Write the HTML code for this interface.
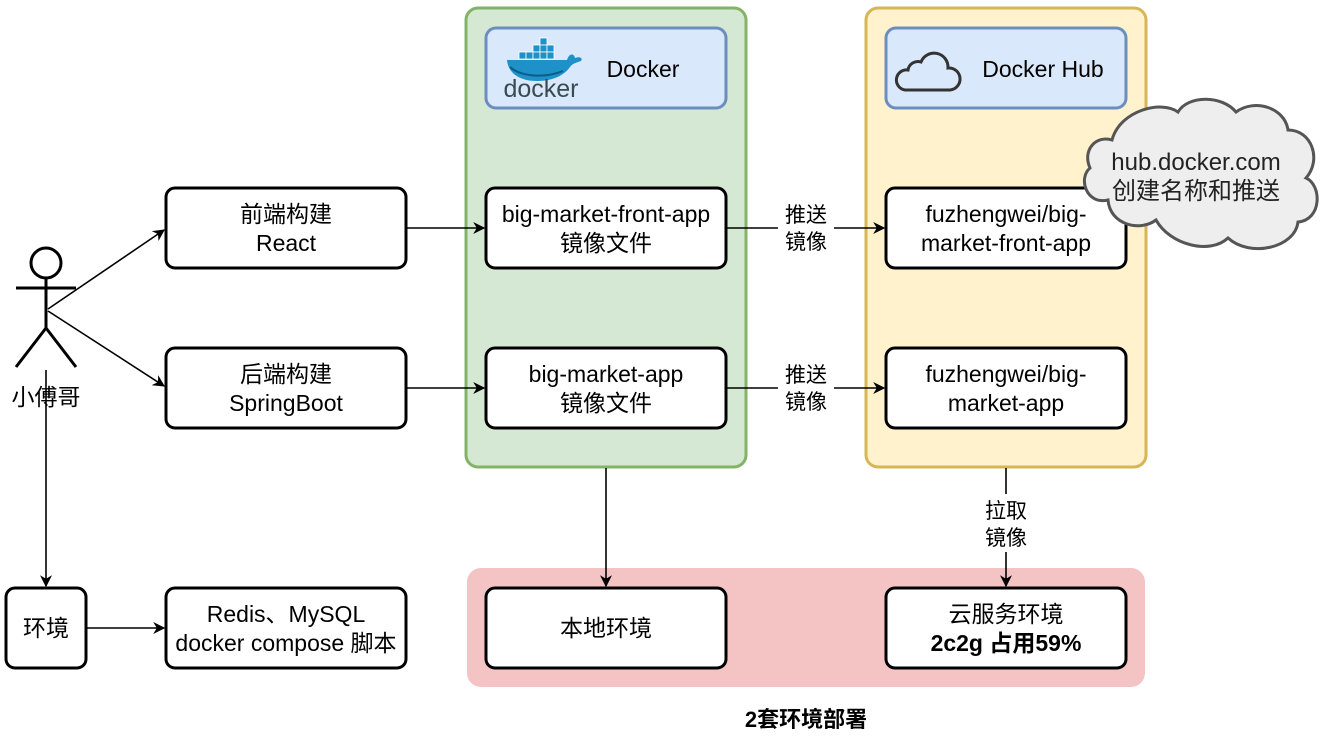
<!DOCTYPE html>
<html><head><meta charset="utf-8"><style>
html,body{margin:0;padding:0;background:#fff;}
svg{display:block}
text{font-family:"Liberation Sans","Noto Sans CJK SC",sans-serif;font-size:23px;fill:#000;text-anchor:middle;}
</style></head><body>
<svg width="1324" height="742" viewBox="0 0 1324 742" xmlns="http://www.w3.org/2000/svg">
<defs>
<marker id="a" viewBox="0 0 10 10" refX="9" refY="5" markerWidth="12" markerHeight="12" markerUnits="userSpaceOnUse" orient="auto">
<path d="M0,0 L10,5 L0,10 L3,5 Z" fill="#000"/></marker>
</defs>
<rect x="466" y="8" width="280" height="459" rx="12" fill="#d5e8d4" stroke="#82b366" stroke-width="3"/>
<rect x="866" y="8" width="280" height="459" rx="12" fill="#fff2cc" stroke="#d6b656" stroke-width="3"/>
<rect x="467" y="568" width="678" height="119" rx="14" fill="#f4c4c4"/>
<rect x="486" y="28" width="240" height="80" rx="10" fill="#dae8fc" stroke="#6c8ebf" stroke-width="3"/>
<rect x="886" y="28" width="240" height="80" rx="10" fill="#dae8fc" stroke="#6c8ebf" stroke-width="3"/>
<text x="643" y="77">Docker</text>
<text x="1043" y="77">Docker Hub</text>
<g>
<g fill="#1d91c8" stroke="#fff" stroke-width="0.8">
<rect x="540" y="38" width="7" height="7"/>
<rect x="533" y="45" width="7" height="7"/><rect x="540" y="45" width="7" height="7"/><rect x="547" y="45" width="7" height="7"/>
<rect x="519" y="52" width="7" height="7"/><rect x="526" y="52" width="7" height="7"/><rect x="533" y="52" width="7" height="7"/><rect x="540" y="52" width="7" height="7"/><rect x="547" y="52" width="7" height="7"/>
</g>
<path d="M507,60 H567 C569,53 574,53 575,58 C580,56 583,58 581,61 C575,63 572,64 570,67 C563,77 550,81 537,81 C518,81 508,72 507,60 Z" fill="#1d91c8"/>
<path d="M510,67 C520,76 543,79 563,71" stroke="#0c5c88" stroke-width="2" fill="none"/>
<text x="541" y="97" style="font-size:25px;fill:#3a4a50">docker</text>
</g>
<path d="M905,90 H950 A11,11 0 0 0 948,68 A14,14 0 0 0 921,62 A10,10 0 0 0 908,70 A10,10 0 0 0 905,90 Z" fill="none" stroke="#333" stroke-width="3"/>
<g fill="#fff" stroke="#000" stroke-width="3">
<rect x="166" y="188" width="240" height="80" rx="9"/>
<rect x="166" y="348" width="240" height="80" rx="9"/>
<rect x="486" y="188" width="240" height="80" rx="9"/>
<rect x="486" y="348" width="240" height="80" rx="9"/>
<rect x="886" y="188" width="240" height="80" rx="9"/>
<rect x="886" y="348" width="240" height="80" rx="9"/>
<rect x="6" y="588" width="80" height="80" rx="9"/>
<rect x="166" y="588" width="240" height="80" rx="9"/>
<rect x="486" y="588" width="240" height="80" rx="9"/>
<rect x="886" y="588" width="240" height="80" rx="9"/>
</g>
<text x="286" y="222">前端构建</text><text x="286" y="251">React</text>
<text x="286" y="382">后端构建</text><text x="286" y="411">SpringBoot</text>
<text x="606" y="222">big-market-front-app</text><text x="606" y="251">镜像文件</text>
<text x="606" y="382">big-market-app</text><text x="606" y="411">镜像文件</text>
<text x="1006" y="222">fuzhengwei/big-</text><text x="1006" y="251">market-front-app</text>
<text x="1006" y="382">fuzhengwei/big-</text><text x="1006" y="411">market-app</text>
<text x="46" y="636">环境</text>
<text x="286" y="622">Redis、MySQL</text><text x="286" y="651">docker compose 脚本</text>
<text x="606" y="636">本地环境</text>
<text x="1006" y="622">云服务环境</text><text x="1006" y="651" font-weight="bold">2c2g 占用59%</text>
<path d="M1112,140 C1096,135 1082,150 1090,168 C1078,178 1086,205 1108,200 C1110,225 1140,232 1156,220 C1170,245 1210,255 1228,238 C1250,258 1295,248 1298,222 C1322,220 1322,185 1306,178 C1322,160 1312,130 1288,130 C1285,108 1255,98 1236,112 C1222,95 1188,95 1178,112 C1162,100 1120,110 1112,140 Z" fill="#eeeeee" stroke="#555" stroke-width="3"/>
<text x="1196" y="170" style="fill:#222;font-size:24px">hub.docker.com</text>
<text x="1196" y="199" style="fill:#222;font-size:24px">创建名称和推送</text>
<g stroke="#000" stroke-width="3" fill="none">
<circle cx="46" cy="263" r="15" fill="#fff"/>
<line x1="46" y1="278" x2="46" y2="328"/>
<line x1="16" y1="288" x2="76" y2="288"/>
<line x1="46" y1="328" x2="16" y2="367"/>
<line x1="46" y1="328" x2="76" y2="367"/>
</g>
<text x="46" y="405">小傅哥</text>
<g stroke="#000" stroke-width="1.6" fill="none" marker-end="url(#a)">
<line x1="48" y1="309" x2="164" y2="230"/>
<line x1="48" y1="311" x2="164" y2="386"/>
<line x1="46" y1="370" x2="46" y2="586"/>
<line x1="86" y1="628" x2="164" y2="628"/>
<line x1="406" y1="228" x2="484" y2="228"/>
<line x1="406" y1="388" x2="484" y2="388"/>
<line x1="726" y1="228" x2="884" y2="228"/>
<line x1="726" y1="388" x2="884" y2="388"/>
<line x1="606" y1="468" x2="606" y2="586"/>
<line x1="1006" y1="468" x2="1006" y2="586"/>
</g>
<rect x="778" y="203" width="56" height="52" fill="#fff"/>
<text x="806" y="222" style="font-size:21px">推送</text><text x="806" y="249" style="font-size:21px">镜像</text>
<rect x="778" y="363" width="56" height="52" fill="#fff"/>
<text x="806" y="382" style="font-size:21px">推送</text><text x="806" y="409" style="font-size:21px">镜像</text>
<rect x="978" y="494" width="56" height="58" fill="#fff"/>
<text x="1006" y="518" style="font-size:21px">拉取</text><text x="1006" y="545" style="font-size:21px">镜像</text>
<text x="806" y="727" font-weight="bold" style="font-size:22px">2套环境部署</text>
</svg>
</body></html>
